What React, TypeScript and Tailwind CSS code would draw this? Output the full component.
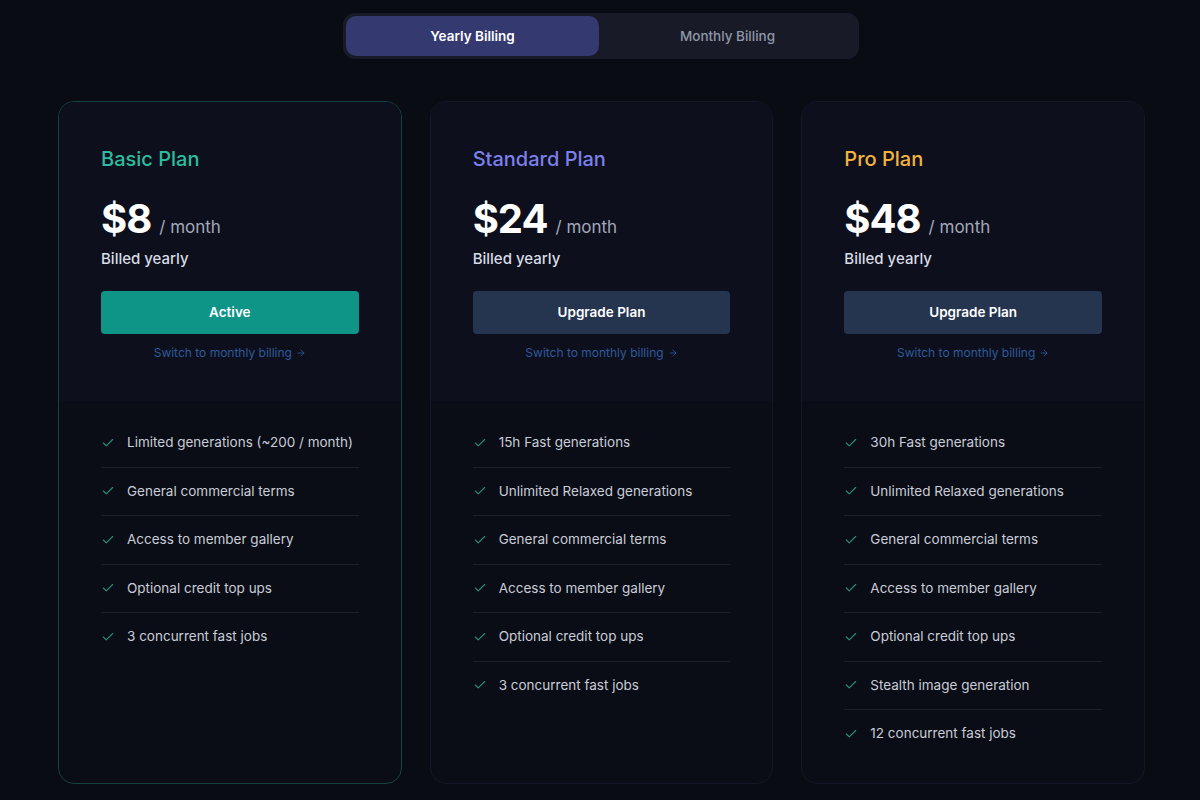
import React from "react";
import { Check, ArrowRight } from "lucide-react";

type Plan = {
  name: string;
  price: string;
  titleColor: string;
  active?: boolean;
  features: string[];
};

const plans: Plan[] = [
  {
    name: "Basic Plan",
    price: "$8",
    titleColor: "text-[#2bbd9d]",
    active: true,
    features: [
      "Limited generations (~200 / month)",
      "General commercial terms",
      "Access to member gallery",
      "Optional credit top ups",
      "3 concurrent fast jobs",
    ],
  },
  {
    name: "Standard Plan",
    price: "$24",
    titleColor: "text-[#7c80ea]",
    features: [
      "15h Fast generations",
      "Unlimited Relaxed generations",
      "General commercial terms",
      "Access to member gallery",
      "Optional credit top ups",
      "3 concurrent fast jobs",
    ],
  },
  {
    name: "Pro Plan",
    price: "$48",
    titleColor: "text-[#f4b23f]",
    features: [
      "30h Fast generations",
      "Unlimited Relaxed generations",
      "General commercial terms",
      "Access to member gallery",
      "Optional credit top ups",
      "Stealth image generation",
      "12 concurrent fast jobs",
    ],
  },
];

const PlanCard: React.FC<{ plan: Plan }> = ({ plan }) => (
  <div
    className={`flex flex-col h-[683px] rounded-2xl border overflow-hidden bg-[#0a0c16] ${
      plan.active ? "border-[#17433f]" : "border-[#141725]"
    }`}
  >
    <div className="px-[42px] pt-[43px] pb-[40px] bg-[#0d0f1d]">
      <h3 className={`text-[20px] leading-[28px] font-medium ${plan.titleColor}`}>
        {plan.name}
      </h3>
      <div className="mt-[22px] flex items-baseline gap-[8px]">
        <span className="text-[40px] leading-[48px] font-bold text-white tracking-tight">
          {plan.price}
        </span>
        <span className="text-[17px] text-[#a3a9b8]">/ month</span>
      </div>
      <div className="mt-[5px] text-[15px] leading-[22px] font-medium text-[#d9dce4]">
        Billed yearly
      </div>
      <button
        className={`mt-[21px] w-full h-[43px] rounded-[4px] text-[13.5px] font-semibold text-white ${
          plan.active ? "bg-[#0f9488]" : "bg-[#253550]"
        }`}
      >
        {plan.active ? "Active" : "Upgrade Plan"}
      </button>
      <div className="mt-[11px] flex items-center justify-center gap-1 text-[12px] leading-[16px] text-[#2e5a99]">
        Switch to monthly billing
        <ArrowRight size={10} strokeWidth={2} />
      </div>
    </div>
    <ul className="px-[42px] pt-[18px]">
      {plan.features.map((f, i) => (
        <li
          key={f}
          className={`flex items-center gap-[12px] py-[14px] text-[13.5px] leading-[19.5px] text-[#c9cdd8] ${
            i < plan.features.length - 1 ? "border-b border-[#1b1f2c]" : ""
          }`}
        >
          <Check size={14} strokeWidth={2} className="text-[#2a8c74] shrink-0" />
          <span>{f}</span>
        </li>
      ))}
    </ul>
  </div>
);

export default function App() {
  return (
    <div
      className="min-h-[800px] w-full bg-[#0a0c14] pt-[13px]"
      style={{ fontFamily: "Inter, 'Noto Sans', sans-serif" }}
    >
      <div className="ml-[343px] w-[516px] h-[46px] rounded-xl bg-[#181a27] p-[3px] flex">
        <button className="w-[253px] h-[40px] rounded-[10px] bg-[#343970] text-[13.5px] font-semibold text-white">
          Yearly Billing
        </button>
        <button className="flex-1 h-[40px] text-[13.5px] font-medium text-[#8f97a8]">
          Monthly Billing
        </button>
      </div>
      <div className="ml-[58px] mt-[42px] w-[1087px] grid grid-cols-3 gap-[28px]">
        {plans.map((p) => (
          <PlanCard key={p.name} plan={p} />
        ))}
      </div>
    </div>
  );
}
